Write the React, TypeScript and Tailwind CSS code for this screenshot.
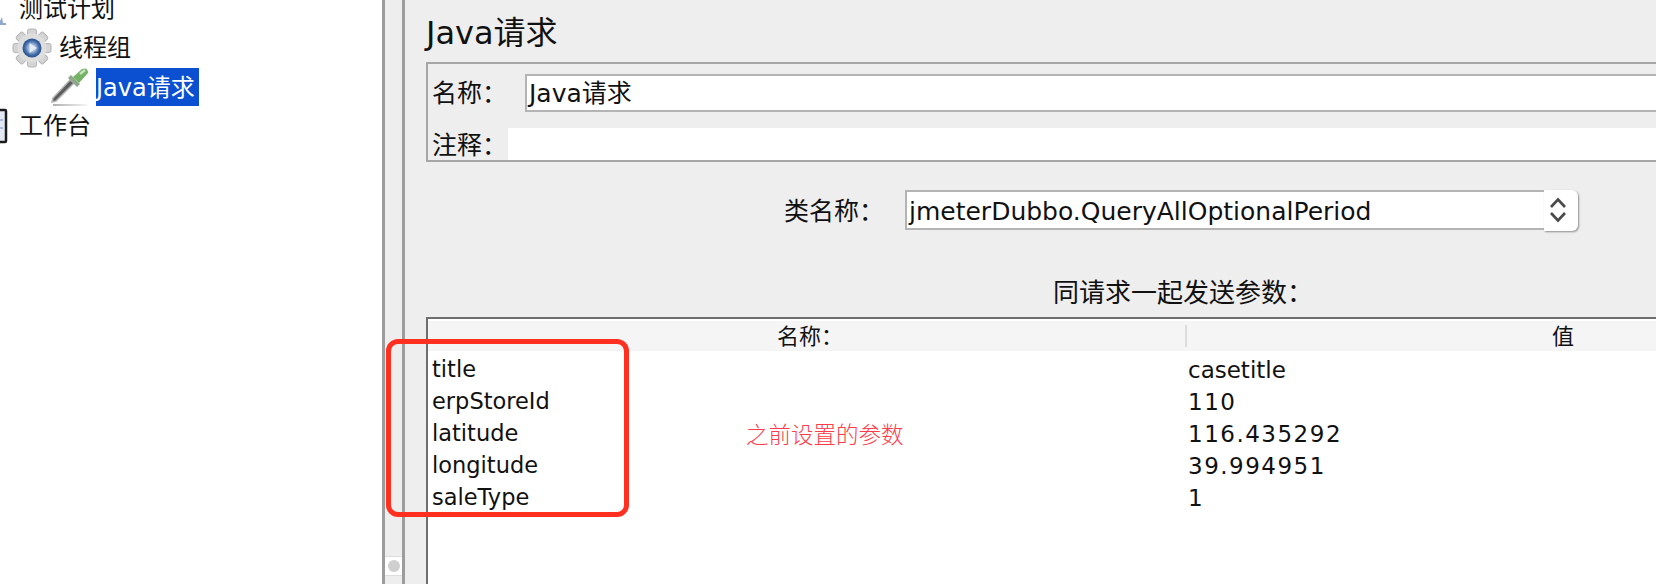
const font = "font-['Lucida_Grande','DejaVu_Sans','Noto_Sans_CJK_SC',sans-serif]";

function Gear() {
  const teeth = [0, 45, 90, 135, 180, 225, 270, 315];
  return (
    <svg width="40" height="40" viewBox="0 0 40 40">
      <defs>
        <radialGradient id="blue" cx="50%" cy="50%" r="50%">
          <stop offset="0%" stopColor="#dbe6f4" />
          <stop offset="45%" stopColor="#8fabd2" />
          <stop offset="75%" stopColor="#3f6aa8" />
          <stop offset="100%" stopColor="#2b4f8c" />
        </radialGradient>
      </defs>
      {teeth.map((a) => (
        <rect key={a} x="15.5" y="1" width="9" height="10" rx="2" fill="#d4d4d4" stroke="#b4b4b4" strokeWidth="1" transform={`rotate(${a} 20 20)`} />
      ))}
      <circle cx="20" cy="20" r="14.5" fill="#dedede" />
      <circle cx="20" cy="20" r="9.5" fill="url(#blue)" />
      <path d="M17.5 15 L25 20 L17.5 25 Z" fill="#e4ecf6" />
    </svg>
  );
}

function Dropper() {
  return (
    <svg width="40" height="40" viewBox="0 0 40 40">
      <defs>
        <linearGradient id="fade" x1="0" x2="1" y1="0" y2="0">
          <stop offset="0%" stopColor="#b0b0b0" />
          <stop offset="100%" stopColor="#f4f4f4" />
        </linearGradient>
      </defs>
      <rect x="2" y="37" width="34" height="2" fill="url(#fade)" />
      <path d="M2 31 L1 35 L5 34 L23 16 L19 13 Z" fill="#5c5c5c" stroke="#b4b4b4" strokeWidth="1.5" />
      <path d="M17 11 L26 20 L29 17 L20 8 Z" fill="#8da88a" />
      <path d="M22 10 L31 2 Q37 0 37 6 L28 16 Z" fill="#74b266" />
      <path d="M29 7 L34 3" stroke="#c6e6b8" strokeWidth="2.5" />
    </svg>
  );
}

function Clipboard() {
  return (
    <svg width="8" height="36" viewBox="0 0 8 36">
      <rect x="-12" y="2" width="18" height="32" rx="1" fill="#e3e9f2" stroke="#1c1c1c" strokeWidth="2.5" />
      <path d="M-6 12 H3 M-6 20 H3" stroke="#a9bbd6" strokeWidth="2" />
    </svg>
  );
}

function PlanIcon() {
  return (
    <svg width="8" height="36" viewBox="0 0 8 36">
      <path d="M0 30 L2 26 L3 32 L6 32 V34 H0 Z" fill="#8fa9d0" />
    </svg>
  );
}

function TreeRow({ indent, icon, gap, children, selected }: { indent: string; icon?: React.ReactNode; gap: string; children: React.ReactNode; selected?: boolean }) {
  return (
    <div className={`flex h-[39px] items-center ${indent}`}>
      {icon}
      <span className={`${gap} ${selected ? "flex h-[38px] items-center bg-[#0a50d0] pr-[4px] pt-[2px] text-white" : "text-[#111]"}`}>{children}</span>
    </div>
  );
}

const rows = [
  ["title", "casetitle", ""],
  ["erpStoreId", "110", "tracking-[1.5px]"],
  ["latitude", "116.435292", "tracking-[1.5px]"],
  ["longitude", "39.994951", "tracking-[1.5px]"],
  ["saleType", "1", ""],
];

export default function App() {
  return (
    <div className={`${font} relative flex h-[584px] w-[1656px] overflow-hidden bg-white text-[25px] text-[#111]`}>
      {/* tree */}
      <div className="-mt-[11px] w-[382px] shrink-0 bg-white text-[24px]">
        <TreeRow indent="" gap="ml-[11px]" icon={<PlanIcon />}>测试计划</TreeRow>
        <TreeRow indent="pl-[12px]" gap="ml-[7px]" icon={<Gear />}>线程组</TreeRow>
        <TreeRow indent="pl-[51px]" gap="ml-[5px]" icon={<Dropper />} selected>Java请求</TreeRow>
        <TreeRow indent="" gap="ml-[11px]" icon={<Clipboard />}>工作台</TreeRow>
      </div>

      {/* splitter */}
      <div className="flex w-[23px] shrink-0 flex-col justify-end border-x-[3px] border-[#9c9c9c] bg-[#eeeeee] pb-[8px]">
        <div className="flex h-[20px] items-center justify-center border-y border-[#dddddd] bg-white">
          <div className="h-[12px] w-[12px] rounded-full bg-[#cfcfcf]" />
        </div>
      </div>

      {/* editor */}
      <div className="flex min-w-0 flex-1 flex-col bg-[#eeeeee] pl-[21px]">
        <div className="flex h-[62px] items-center pt-[4px] text-[32px] leading-none">Java请求</div>

        <div className="flex h-[100px] flex-col border-y-2 border-l-2 border-[#a6a6a6] pl-[4px]">
          <div className="mt-[9px] flex h-[39px] items-center">
            <span className="w-[93px] shrink-0 pt-[3px]">名称：</span>
            <div className="flex h-[38px] flex-1 items-center border-2 border-r-0 border-[#b4b4b4] bg-white pl-[2px] pt-[3px]">Java请求</div>
          </div>
          <div className="mt-[16px] flex h-[32px] items-center">
            <span className="w-[76px] shrink-0 pt-[2px] leading-none">注释：</span>
            <div className="h-full flex-1 bg-white" />
          </div>
        </div>

        <div className="mt-[27px] flex h-[42px] items-center pl-[358px]">
          <span className="w-[121px] shrink-0 pt-[3px]">类名称：</span>
          <div className="flex h-[40px] w-[640px] items-center border-y-2 border-l-2 border-[#b4b4b4] bg-white pl-[2px] pt-[3px]">jmeterDubbo.QueryAllOptionalPeriod</div>
          <div className="-ml-[1px] flex h-[41px] w-[34px] items-center justify-center rounded-r-[6px] bg-white pr-[7px] shadow-[1px_1px_2px_rgba(0,0,0,0.4)]">
            <svg width="18" height="28" viewBox="0 0 18 28" fill="none" stroke="#4a4a4a" strokeWidth="2.6">
              <path d="M2 11 L9 3.5 L16 11" />
              <path d="M2 17 L9 24.5 L16 17" />
            </svg>
          </div>
        </div>

        <div className="mt-[44px] flex h-[36px] items-center pl-[627px] pt-[1px] text-[26px]">同请求一起发送参数：</div>

        <div className="mt-[6px] min-h-0 flex-1 border-t-2 border-l-2 border-[#6e6e6e] bg-white text-[23px]">
          <div className="mb-[3px] flex h-[32px] items-center border-t-2 border-white bg-[#f5f5f5] text-[22px]">
            <div className="w-[757px] pl-[349px]">名称：</div>
            <div className="h-[22px] w-[2px] bg-[#dcdcdc]" />
            <div className="flex-1 pl-[365px]">值</div>
          </div>
          {rows.map(([k, v, t]) => (
            <div key={k} className="flex h-[32px] items-center">
              <div className="w-[760px] pl-[4px] text-[22.5px]">{k}</div>
              <div className={t}>{v}</div>
            </div>
          ))}
        </div>
      </div>

      {/* annotation */}
      <div className="absolute left-[386px] top-[339px] h-[178px] w-[243px] rounded-[12px] border-[5px] border-[#ff3020]" />
      <div className="absolute left-[746px] top-[421px] text-[22.5px] font-light leading-[28px] text-[#ff3b4c]">之前设置的参数</div>
    </div>
  );
}
